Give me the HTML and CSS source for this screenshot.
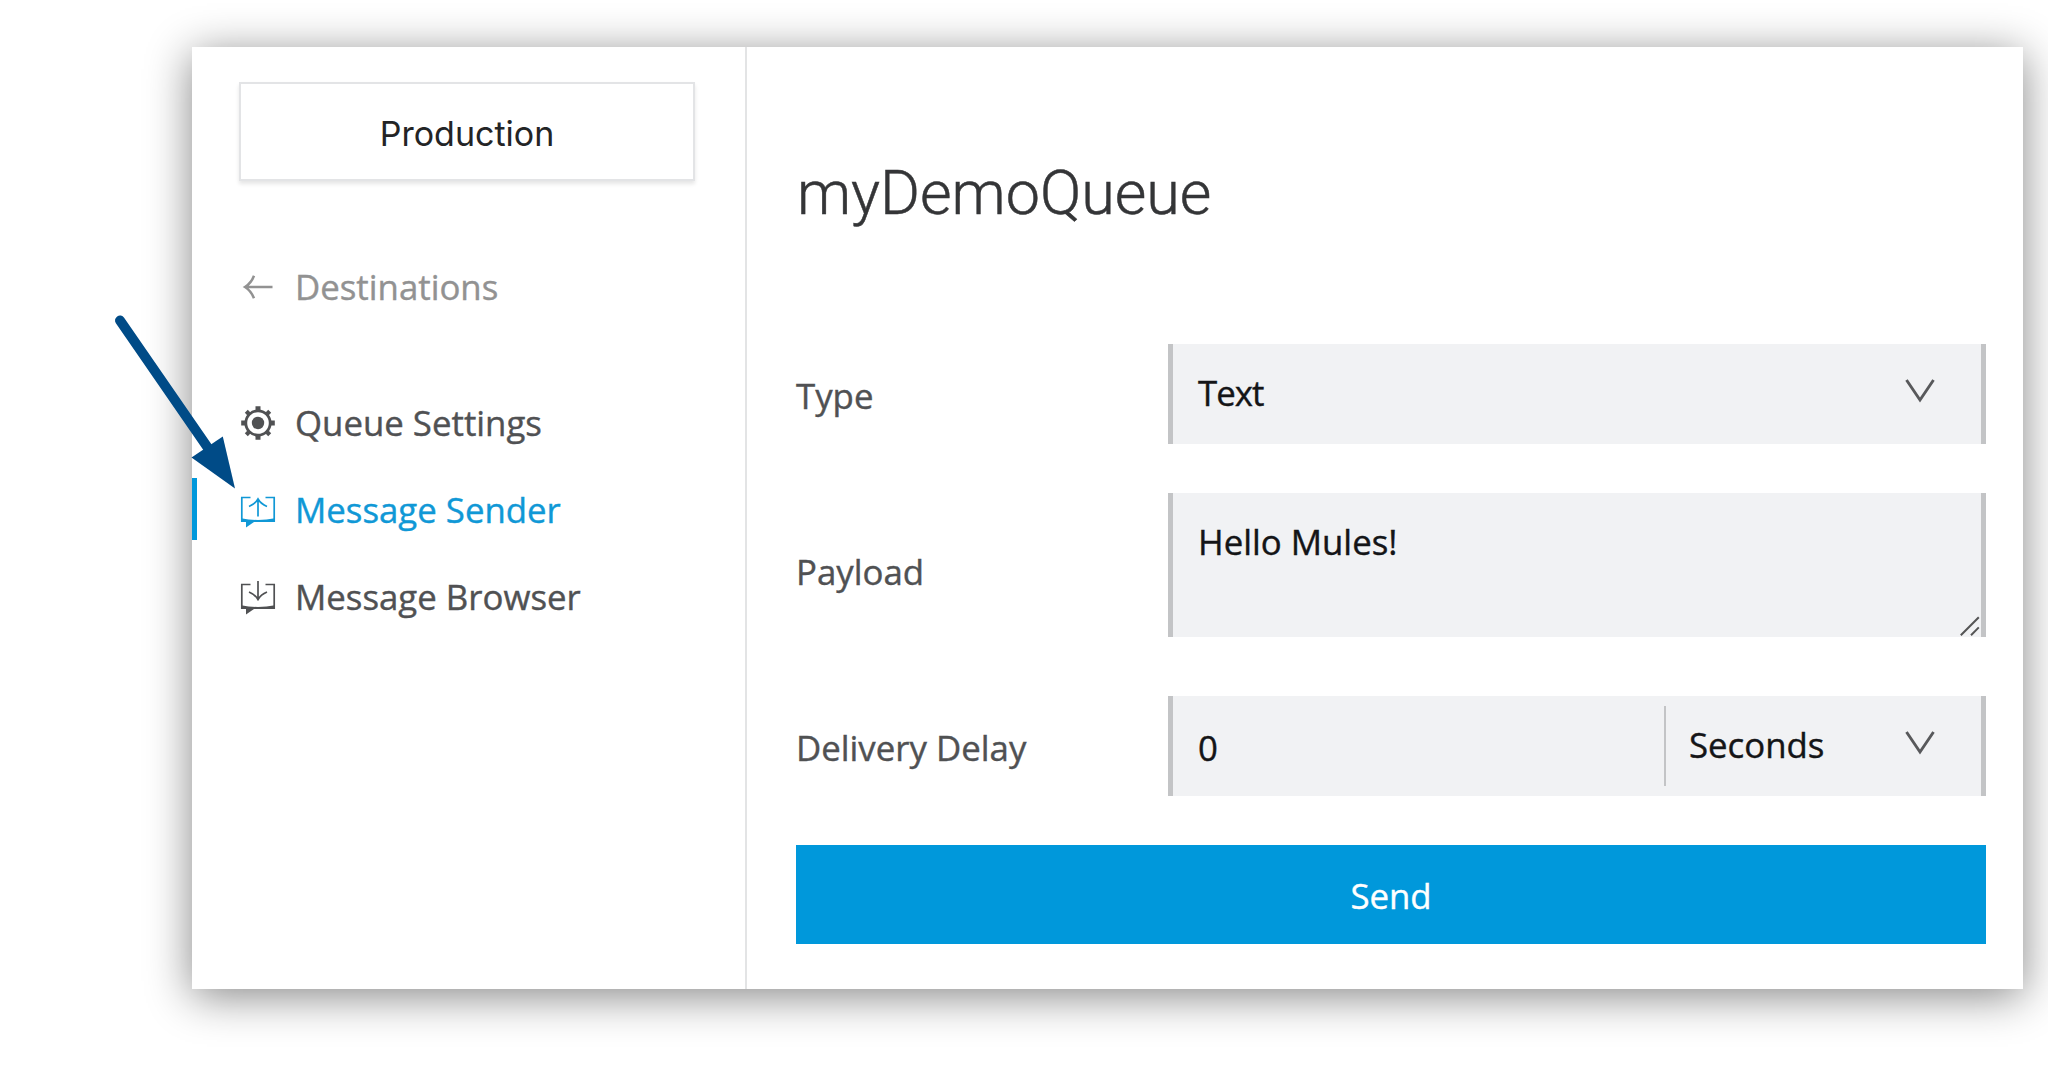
FILE: index.html
```html
<!DOCTYPE html>
<html lang="en">
<head>
<meta charset="utf-8">
<title>myDemoQueue</title>
<link rel="stylesheet" href="styles.css">
</head>
<body>
<div class="panel">
  <aside class="sidebar">
    <button class="environment">Production</button>
    <a class="nav-item back">
      <svg class="icon" viewBox="0 0 36 36"><path d="M32.500 18H5M14 6.700C12 12 9 15.500 5 18C9 20.500 12 24 14 29.300" fill="none" stroke="currentColor" stroke-width="2.500"/></svg>
      <span>Destinations</span>
    </a>
    <nav class="nav">
      <a class="nav-item">
        <svg class="icon" viewBox="0 0 36 36"><g fill="none" stroke="currentColor"><circle cx="18" cy="18" r="12.200" stroke-width="2.800"/><g stroke-width="5"><path d="M18 1.200v5M18 29.800v5M1.200 18h5M29.800 18h5"/><path d="M6.300 6.300l3.400 3.400M26.300 26.300l3.400 3.400M29.700 6.300l-3.400 3.400M9.700 26.300l-3.400 3.400" stroke-width="4.200"/></g></g><circle cx="18" cy="18" r="6.200" fill="currentColor"/></svg>
        <span>Queue Settings</span>
      </a>
      <a class="nav-item active">
        <svg class="icon" viewBox="0 0 36 36"><path d="M10.500 5.500H1.800V30M25.500 5.500h8.700V30M18 7v17.500M9 14.500C13 12.800 16 10.500 18 7C20 10.500 23 12.800 27 14.500" fill="none" stroke="currentColor" stroke-width="1.700"/><path d="M1 26.200Q18 29.700 35 26.200V30H14L6 35.500V30H1z" fill="currentColor"/></svg>
        <span>Message Sender</span>
      </a>
      <a class="nav-item">
        <svg class="icon" viewBox="0 0 36 36"><path d="M10.500 5.500H1.800V30M25.500 5.500h8.700V30M18 2v18.500M9 13C13 14.700 16 17 18 20.500C20 17 23 14.700 27 13" fill="none" stroke="currentColor" stroke-width="1.700"/><path d="M1 26.200Q18 29.700 35 26.200V30H14L6 35.500V30H1z" fill="currentColor"/></svg>
        <span>Message Browser</span>
      </a>
    </nav>
  </aside>
  <main class="content">
    <h1 class="title">myDemoQueue</h1>
    <div class="form">
      <div class="row">
        <label class="label">Type</label>
        <div class="field">
          <span class="value raised tight">Text</span>
          <svg class="chevron" viewBox="0 0 30 24"><path d="M1.500 1L15 21L28.500 1" fill="none" stroke="currentColor" stroke-width="2.900"/></svg>
        </div>
      </div>
      <div class="row tall">
        <label class="label">Payload</label>
        <div class="field textarea">
          <span class="value">Hello Mules!</span>
          <svg class="grip" viewBox="0 0 20 20"><path d="M.8 19.200L18.800 1.200M11 19.200L18.800 11.400" fill="none" stroke="#555" stroke-width="2"/></svg>
        </div>
      </div>
      <div class="row">
        <label class="label">Delivery Delay</label>
        <div class="field">
          <span class="value lowered">0</span>
          <div class="unit">
            <span class="value raised">Seconds</span>
            <svg class="chevron" viewBox="0 0 30 24"><path d="M1.500 1L15 21L28.500 1" fill="none" stroke="currentColor" stroke-width="2.900"/></svg>
          </div>
        </div>
      </div>
      <button class="send">Send</button>
    </div>
  </main>
</div>
<svg class="pointer" viewBox="0 0 130 180"><path d="M10 10.500L98 138" stroke="#004b87" stroke-width="10" stroke-linecap="round"/><path d="M125 178.500L81.500 147.500L112.800 126.500z" fill="#004b87"/></svg>
</body>
</html>
```

FILE: styles.css
```css
* { box-sizing: border-box; }

body {
  margin: 0;
  height: 1074px;
  padding: 47px 25px 85px 192px;
  overflow: hidden;
  background: #fff;
  font: 34.8px/62px "Open Sans", "Noto Sans", sans-serif;
  -webkit-text-stroke: .4px;
  color: #505153;
}

.panel {
  display: flex;
  height: 942px;
  background: #fff;
  box-shadow: 0 7px 42px rgba(0, 0, 0, .48);
}

.sidebar {
  width: 555px;
  flex: none;
  padding-top: 35px;
  border-right: 2px solid #e3e4e5;
}

button { font: inherit; padding: 0; border: 0; display: block; }

.environment {
  width: 456px;
  height: 99px;
  margin: 0 0 74px 47px;
  border: 2px solid #e3e4e6;
  background: #fff;
  color: #232426;
  box-shadow: 0 3px 4px rgba(0, 0, 0, .1);
  padding-top: 4px;
  font: 34px/62px Inter, sans-serif;
  -webkit-text-stroke: 0;
}

.nav {
  display: flex;
  flex-direction: column;
  gap: 25px;
  margin-top: 74px;
}

.nav-item {
  display: flex;
  align-items: center;
  gap: 19px;
  height: 62px;
  padding-left: 48px;
}

.nav-item span { padding-top: 2px; }

.back { color: #929292; }

.active {
  color: #1098d6;
  border-left: 5px solid #0098db;
  padding-left: 43px;
}

.icon { width: 36px; height: 36px; margin-top: 2px; }

.content {
  flex: 1;
  padding: 106px 37px 0 49px;
}

.title {
  margin: 0 0 111px;
  padding-left: 1px;
  font: 300 61px/80px Roboto, sans-serif;
  -webkit-text-stroke: .5px;
  color: #343537;
}

.form {
  display: flex;
  flex-direction: column;
}

.row {
  display: flex;
  height: 100px;
  margin-bottom: 49px;
}

.tall { height: 156px; margin-bottom: 47px; }

.label {
  width: 372px;
  align-self: center;
  padding-top: 3px;
}

.tall .label { padding-top: 1px; }

.field {
  flex: 1;
  display: flex;
  align-items: center;
  justify-content: space-between;
  padding: 0 46px 0 25px;
  border: solid #c3c4c6;
  border-width: 0 5px;
  background: #f1f2f4;
  color: #141517;
}

.textarea {
  height: 144px;
  align-items: flex-start;
  padding: 18px 1px 1px 25px;
}

.raised { padding-bottom: 2px; }

.lowered { padding-top: 3px; }

.tight { letter-spacing: -1px; }

.chevron {
  width: 30px;
  height: 24px;
  margin-bottom: 6px;
  color: #58595b;
}

.grip { width: 20px; height: 20px; align-self: flex-end; }

.unit {
  display: flex;
  align-items: center;
  justify-content: space-between;
  width: 271px;
  height: 80px;
  padding-left: 23px;
  border-left: 2px solid #c3c4c6;
}

.send {
  height: 99px;
  background: #0098db;
  color: #fff;
  padding-top: 3px;
}

.pointer {
  position: absolute;
  left: 110px;
  top: 310px;
  width: 130px;
  height: 180px;
}
```
